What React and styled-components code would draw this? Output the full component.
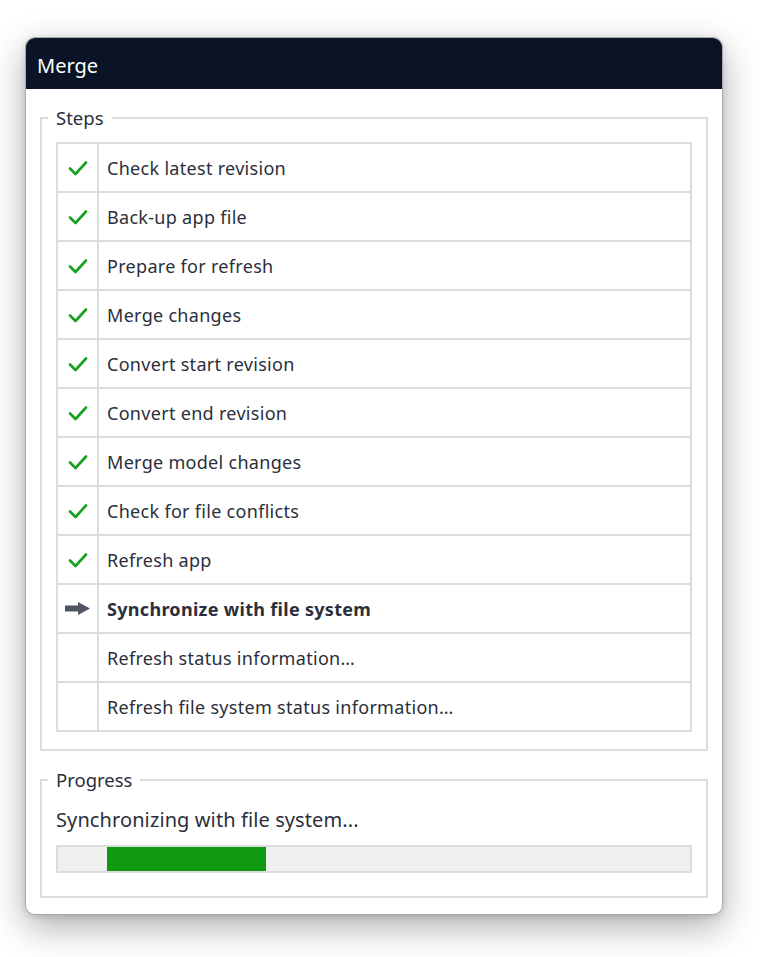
import React from 'react';
import styled, { createGlobalStyle } from 'styled-components';

const GlobalStyle = createGlobalStyle`
  html, body {
    margin: 0;
    padding: 0;
    background: #ffffff;
  }
  body {
    font-family: "Noto Sans", "Noto Sans CJK KR", sans-serif;
    color: #2a2f3b;
  }
`;

const steps = [
  { label: 'Check latest revision', state: 'done' },
  { label: 'Back-up app file', state: 'done' },
  { label: 'Prepare for refresh', state: 'done' },
  { label: 'Merge changes', state: 'done' },
  { label: 'Convert start revision', state: 'done' },
  { label: 'Convert end revision', state: 'done' },
  { label: 'Merge model changes', state: 'done' },
  { label: 'Check for file conflicts', state: 'done' },
  { label: 'Refresh app', state: 'done' },
  { label: 'Synchronize with file system', state: 'active' },
  { label: 'Refresh status information…', state: 'pending' },
  { label: 'Refresh file system status information…', state: 'pending' },
];

const Page = styled.div`
  padding: 37px 0 0 25px;
  height: 957px;
  box-sizing: border-box;
`;

const Window = styled.div`
  width: 698px;
  height: 878px;
  box-sizing: border-box;
  background: #fff;
  border: 1px solid #a9a9a9;
  border-radius: 10px;
  overflow: hidden;
  box-shadow: 0 12px 36px rgba(0, 0, 0, 0.32), 0 2px 6px rgba(0, 0, 0, 0.12);
  display: flex;
  flex-direction: column;
`;

const TitleBar = styled.div`
  height: 51px;
  background: #0b1426;
  color: #fff;
  font-size: 20px;
  display: flex;
  align-items: center;
  padding: 4px 0 0 11px;
  box-sizing: border-box;
  flex-shrink: 0;
`;

const Body = styled.div`
  padding: 17px 14px 0 14px;
  display: flex;
  flex-direction: column;
  gap: 17px;
`;

const Group = styled.fieldset`
  margin: 0;
  border: 2px solid #dcdcdc;
  padding: ${p => p.$pad};
  min-width: 0;
`;

const Legend = styled.legend`
  font-size: 18.5px;
  padding: 0 8px;
  margin-left: -8px;
  color: #2a2f3b;
  line-height: 24px;
`;

const StepTable = styled.div`
  border: 2px solid #dcdcdc;
  display: flex;
  flex-direction: column;
`;

const StepRow = styled.div`
  display: grid;
  grid-template-columns: 41px 1fr;
  border-top: ${p => (p.$first ? 'none' : '2px solid #dcdcdc')};
  box-sizing: border-box;
  height: ${p => (p.$first ? '47px' : '49px')};
`;

const IconCell = styled.div`
  display: flex;
  align-items: center;
  justify-content: center;
  border-right: 2px solid #dcdcdc;
`;

const LabelCell = styled.div`
  display: flex;
  align-items: center;
  padding-left: 8px;
  font-size: 18px;
  letter-spacing: 0.3px;
  font-weight: ${p => (p.$bold ? 700 : 400)};
  color: #2a2f3b;
`;

const StatusText = styled.div`
  font-size: 20px;
  letter-spacing: 0.1px;
  margin: 14px 0 12px 0;
  color: #2a2f3b;
`;

const Track = styled.div`
  height: 28px;
  box-sizing: border-box;
  border: 2px solid #dcdcdc;
  background: #f0f0f0;
  position: relative;
  margin-bottom: 23px;
`;

const Fill = styled.div`
  position: absolute;
  top: 0;
  bottom: 0;
  background: #0f9a12;
`;

const CheckIcon = () => (
  <svg width="20" height="16" viewBox="0 0 20 16">
    <path d="M2 8.5 L7.5 14 L18 2.5" fill="none" stroke="#15a01d" strokeWidth="2.6" strokeLinecap="round" strokeLinejoin="round" />
  </svg>
);

const ArrowIcon = () => (
  <svg width="25" height="13" viewBox="0 0 25 13">
    <path d="M0 3.5 H13 V0 L25 6.5 L13 13 V9.5 H0 Z" fill="#4f5563" />
  </svg>
);

export default function App() {
  return (
    <>
      <GlobalStyle />
      <Page>
        <Window>
          <TitleBar>Merge</TitleBar>
          <Body>
            <Group $pad="12px 14px 17px 14px">
              <Legend>Steps</Legend>
              <StepTable>
                {steps.map((s, i) => (
                  <StepRow key={s.label} $first={i === 0}>
                    <IconCell>
                      {s.state === 'done' && <CheckIcon />}
                      {s.state === 'active' && <ArrowIcon />}
                    </IconCell>
                    <LabelCell $bold={s.state === 'active'}>{s.label}</LabelCell>
                  </StepRow>
                ))}
              </StepTable>
            </Group>
            <Group $pad="0 14px 0 14px">
              <Legend>Progress</Legend>
              <StatusText>Synchronizing with file system...</StatusText>
              <Track>
                <Fill style={{ left: '49px', width: '159px' }} />
              </Track>
            </Group>
          </Body>
        </Window>
      </Page>
    </>
  );
}
